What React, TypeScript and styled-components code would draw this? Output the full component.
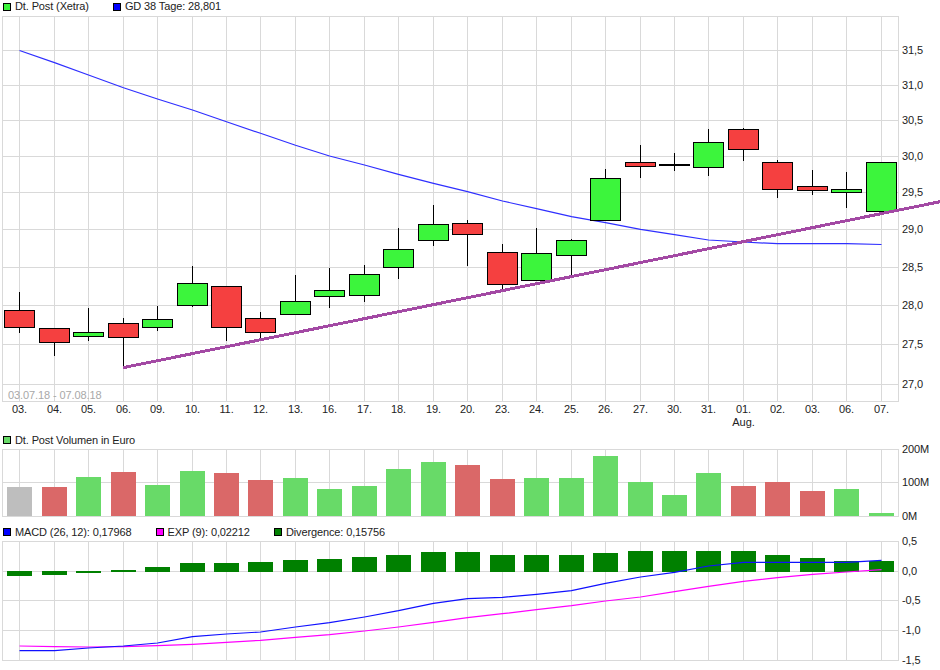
import React from "react";
import styled, { createGlobalStyle } from "styled-components";

const GlobalStyle = createGlobalStyle`
  html, body { margin: 0; padding: 0; background: #fff; }
  body { font-family: "Liberation Sans", Arial, sans-serif; }
`;

const Page = styled.div`
  width: 940px;
  height: 670px;
  display: flex;
  flex-direction: column;
  overflow: hidden;
  background: #fff;
`;

const Legend = styled.div<{ $height: number }>`
  height: ${(p) => p.$height}px;
  flex: none;
  display: flex;
  align-items: center;
  gap: 24px;
  padding-left: 3px;
  font-size: 11px;
  letter-spacing: -0.12px;
  line-height: 1;
  color: #222;
`;

const LegendItem = styled.div`
  display: flex;
  align-items: center;
  gap: 4px;
  white-space: nowrap;
`;

const Swatch = styled.span<{ $color: string }>`
  width: 8px;
  height: 8px;
  box-sizing: border-box;
  border: 1px solid #000;
  background: ${(p) => p.$color};
`;

const Plot = styled.svg`
  display: block;
  flex: none;
  width: 940px;
  overflow: visible;
`;

const GridLine = styled.line`
  stroke: #d9d9d9;
  stroke-width: 1;
  shape-rendering: crispEdges;
`;

const Wick = styled.line`
  stroke: #000;
  stroke-width: 1;
  shape-rendering: crispEdges;
`;

const Body = styled.rect<{ $up: boolean }>`
  fill: ${(p) => (p.$up ? "#3cf53c" : "#f54040")};
  stroke: #000;
  stroke-width: 1;
  shape-rendering: crispEdges;
`;

const Bar = styled.rect<{ $color: string }>`
  fill: ${(p) => p.$color};
  shape-rendering: crispEdges;
`;

const Curve = styled.polyline<{ $color: string }>`
  fill: none;
  stroke: ${(p) => p.$color};
  stroke-width: 1.2;
  stroke-linejoin: round;
`;

const TrendLine = styled.line`
  stroke: #a349a4;
  stroke-width: 3;
  shape-rendering: crispEdges;
`;

const AxisLabel = styled.text`
  font-family: "Liberation Sans", Arial, sans-serif;
  font-size: 11px;
  letter-spacing: -0.08px;
  fill: #222;
`;

const RangeLabel = styled.text`
  font-family: "Liberation Sans", Arial, sans-serif;
  font-size: 11px;
  letter-spacing: -0.1px;
  fill: #a8a8a8;
`;

const XS = [19, 54, 88, 123, 157, 192, 226, 260, 295, 329, 364, 398, 433, 467, 502, 536, 571, 605, 640, 674, 708, 743, 777, 812, 846, 881];
const DAYS = ["03.", "04.", "05.", "06.", "09.", "10.", "11.", "12.", "13.", "16.", "17.", "18.", "19.", "20.", "23.", "24.", "25.", "26.", "27.", "30.", "31.", "01.", "02.", "03.", "06.", "07."];

type Candle = [number, number, number, number, boolean];
const CANDLES: Candle[] = [
  [292, 333, 310, 327, false],
  [328, 356, 328, 342, false],
  [308, 341, 332, 336, true],
  [318, 367, 323, 337, false],
  [306, 331, 319, 327, true],
  [266, 307, 283, 305, true],
  [286, 341, 286, 327, false],
  [312, 338, 318, 332, false],
  [275, 314, 301, 314, true],
  [268, 308, 290, 296, true],
  [265, 302, 274, 295, true],
  [228, 279, 249, 267, true],
  [205, 246, 224, 240, true],
  [220, 266, 223, 234, false],
  [244, 289, 252, 284, false],
  [228, 280, 253, 280, true],
  [239, 276, 240, 255, true],
  [169, 220, 178, 220, true],
  [145, 178, 162, 166, false],
  [153, 171, 164, 165, true],
  [129, 176, 142, 167, true],
  [128, 161, 129, 149, false],
  [160, 198, 162, 189, false],
  [170, 195, 186, 190, false],
  [172, 208, 189, 192, true],
  [162, 212, 162, 211, true],
];

const MA = [50.5, 62.6, 75, 87.7, 99, 110, 121.7, 133.3, 145.3, 156, 165, 174.3, 183.3, 191.7, 201, 208.7, 216.7, 222.7, 229.3, 234.7, 240, 242, 243.7, 243.7, 243.7, 244.5];

const PRICE_ROWS: [number, string][] = [
  [50, "31,5"], [85, "31,0"], [120, "30,5"], [156, "30,0"], [192, "29,5"],
  [229, "29,0"], [267, "28,5"], [305, "28,0"], [344, "27,5"], [384, "27,0"],
];

type Tone = "g" | "r" | "n";
const VOLUME: [number, Tone][] = [
  [487, "n"], [487, "r"], [477, "g"], [472, "r"], [485, "g"], [471, "g"], [473, "r"], [480, "r"], [478, "g"],
  [489, "g"], [486, "g"], [469, "g"], [462, "g"], [465, "r"], [479, "r"], [478, "g"], [478, "g"], [456, "g"],
  [482, "g"], [495, "g"], [473, "g"], [486, "r"], [482, "r"], [491, "r"], [489, "g"], [513, "g"],
];
const TONE_COLOR: Record<Tone, string> = { g: "#68da68", r: "#da6868", n: "#bebebe" };
const VOLUME_ROWS: [number, string][] = [[449, "200M"], [482, "100M"], [516, "0M"]];

const DIVERGENCE: [number, number][] = [
  [571, 576], [571, 575], [571, 573], [570, 572], [567, 572], [563, 572], [563, 572], [562, 572], [560, 572],
  [559, 572], [557, 572], [555, 572], [552, 572], [552, 572], [555, 572], [555, 572], [555, 572], [553, 572],
  [551, 572], [551, 572], [551, 572], [551, 572], [555, 572], [558, 572], [561, 572], [561, 572],
];
const MACD = [650.7, 650.7, 648, 646, 643, 636.7, 634, 632, 627, 622.7, 617, 610.7, 603.3, 598.7, 597.3, 594.3, 590.7, 583.3, 577, 572.3, 566, 562.3, 562.3, 562.3, 562.3, 560.3];
const EXP = [646, 646.7, 647, 646.7, 645.7, 644.3, 642.3, 640.3, 637.3, 634.7, 631, 627, 622.3, 617.7, 613.7, 609.7, 605.7, 601, 597, 591.7, 586.3, 581.3, 577.7, 574.3, 572, 569.7];
const MACD_ROWS: [number, string][] = [[541, "0,5"], [571, "0,0"], [600, "-0,5"], [630, "-1,0"], [660, "-1,5"]];

const points = (ys: number[]) => ys.map((y, i) => `${XS[i] + 0.5},${y}`).join(" ");

const Frame = ({ top, bottom, rows }: { top: number; bottom: number; rows: [number, string][] }) => (
  <>
    <GridLine x1={2.5} x2={2.5} y1={top} y2={bottom + 1} />
    <GridLine x1={898.5} x2={898.5} y1={top} y2={bottom + 1} />
    {XS.map((x) => (
      <GridLine key={x} x1={x + 0.5} x2={x + 0.5} y1={top} y2={bottom + 1} />
    ))}
    <GridLine x1={2} x2={899} y1={top + 0.5} y2={top + 0.5} />
    <GridLine x1={2} x2={899} y1={bottom + 0.5} y2={bottom + 0.5} />
    {rows.map(([y]) => (
      <GridLine key={y} x1={2} x2={899} y1={y + 0.5} y2={y + 0.5} />
    ))}
  </>
);

const Scale = ({ rows }: { rows: [number, string][] }) => (
  <>
    {rows.map(([y, label]) => (
      <AxisLabel key={y} x={902} y={y + 3.5}>
        {label}
      </AxisLabel>
    ))}
  </>
);

export default function App() {
  return (
    <Page>
      <GlobalStyle />
      <Legend $height={13}>
        <LegendItem>
          <Swatch $color="#3cf53c" />
          Dt. Post (Xetra)
        </LegendItem>
        <LegendItem>
          <Swatch $color="#0000ff" />
          GD 38 Tage: 28,801
        </LegendItem>
      </Legend>
      <Plot viewBox="0 13 940 420" height={420}>
        <Frame top={16} bottom={401} rows={PRICE_ROWS} />
        <Curve $color="#2f2fff" points={points(MA)} />
        {CANDLES.map(([wt, wb, bt, bb, up], i) => (
          <g key={i}>
            <Wick x1={XS[i] + 0.5} x2={XS[i] + 0.5} y1={wt} y2={wb} />
            <Body $up={up} x={XS[i] - 14.5} y={bt + 0.5} width={30} height={bb - bt} />
          </g>
        ))}
        <TrendLine x1={123} y1={367.7} x2={940} y2={201.7} />
        <Scale rows={PRICE_ROWS} />
        <RangeLabel x={8} y={399}>
          03.07.18 - 07.08.18
        </RangeLabel>
        {XS.map((x, i) => (
          <AxisLabel key={x} x={x + 0.5} y={413} textAnchor="middle">
            {DAYS[i]}
          </AxisLabel>
        ))}
        <AxisLabel x={743.5} y={426} textAnchor="middle">
          Aug.
        </AxisLabel>
      </Plot>
      <Legend $height={14}>
        <LegendItem>
          <Swatch $color="#68da68" />
          Dt. Post Volumen in Euro
        </LegendItem>
      </Legend>
      <Plot viewBox="0 447 940 78" height={78}>
        <Frame top={449} bottom={516} rows={VOLUME_ROWS} />
        {VOLUME.map(([top, tone], i) => (
          <Bar key={i} $color={TONE_COLOR[tone]} x={XS[i] - 12} y={top} width={25} height={516 - top} />
        ))}
        <Scale rows={VOLUME_ROWS} />
      </Plot>
      <Legend $height={14}>
        <LegendItem>
          <Swatch $color="#0000ff" />
          MACD (26, 12): 0,17968
        </LegendItem>
        <LegendItem>
          <Swatch $color="#ff00ff" />
          EXP (9): 0,02212
        </LegendItem>
        <LegendItem>
          <Swatch $color="#008000" />
          Divergence: 0,15756
        </LegendItem>
      </Legend>
      <Plot viewBox="0 539 940 131" height={131}>
        <Frame top={541} bottom={660} rows={MACD_ROWS} />
        {DIVERGENCE.map(([top, bottom], i) => (
          <Bar key={i} $color="#008000" x={XS[i] - 12} y={top} width={25} height={bottom - top} />
        ))}
        <Curve $color="#ff00ff" points={points(EXP)} />
        <Curve $color="#1010ff" points={points(MACD)} />
        <Scale rows={MACD_ROWS} />
      </Plot>
    </Page>
  );
}
